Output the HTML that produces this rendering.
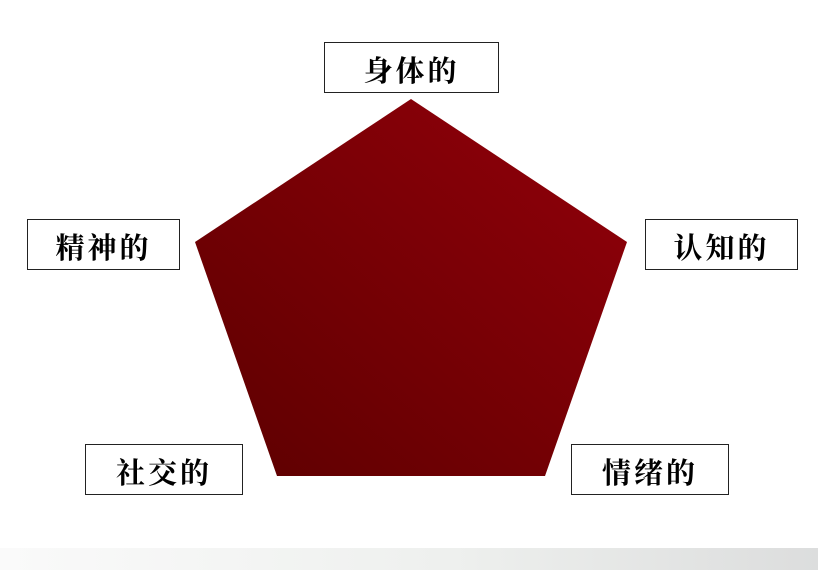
<!DOCTYPE html>
<html><head><meta charset="utf-8"><style>
body{margin:0;width:818px;height:570px;position:relative;background:#fff;overflow:hidden}
.b{position:absolute;box-sizing:border-box;border:1px solid #222;background:#fff;display:flex;align-items:center;justify-content:center;padding-top:4px;font-family:"Liberation Serif","Noto Serif CJK SC",serif;font-weight:bold;font-size:29px;letter-spacing:3px;color:#000}
.band{position:absolute;left:0;top:548px;width:818px;height:22px;background:linear-gradient(to right,#fafafa,#eef0ee 55%,#dcdddd)}
</style></head><body>
<svg width="818" height="570" style="position:absolute;left:0;top:0">
<defs><linearGradient id="g" x1="1" y1="0" x2="0" y2="1"><stop offset="0" stop-color="#93000a"/><stop offset="1" stop-color="#5c0000"/></linearGradient></defs>
<polygon points="411,99 627,242 545,476 277,476 195,242" fill="url(#g)"/>
</svg>
<div class="b" style="left:324px;top:42px;width:175px;height:51px">身体的</div>
<div class="b" style="left:27px;top:219px;width:153px;height:51px">精神的</div>
<div class="b" style="left:645px;top:219px;width:153px;height:51px">认知的</div>
<div class="b" style="left:85px;top:444px;width:158px;height:51px">社交的</div>
<div class="b" style="left:571px;top:444px;width:158px;height:51px">情绪的</div>
<div class="band"></div>
</body></html>
